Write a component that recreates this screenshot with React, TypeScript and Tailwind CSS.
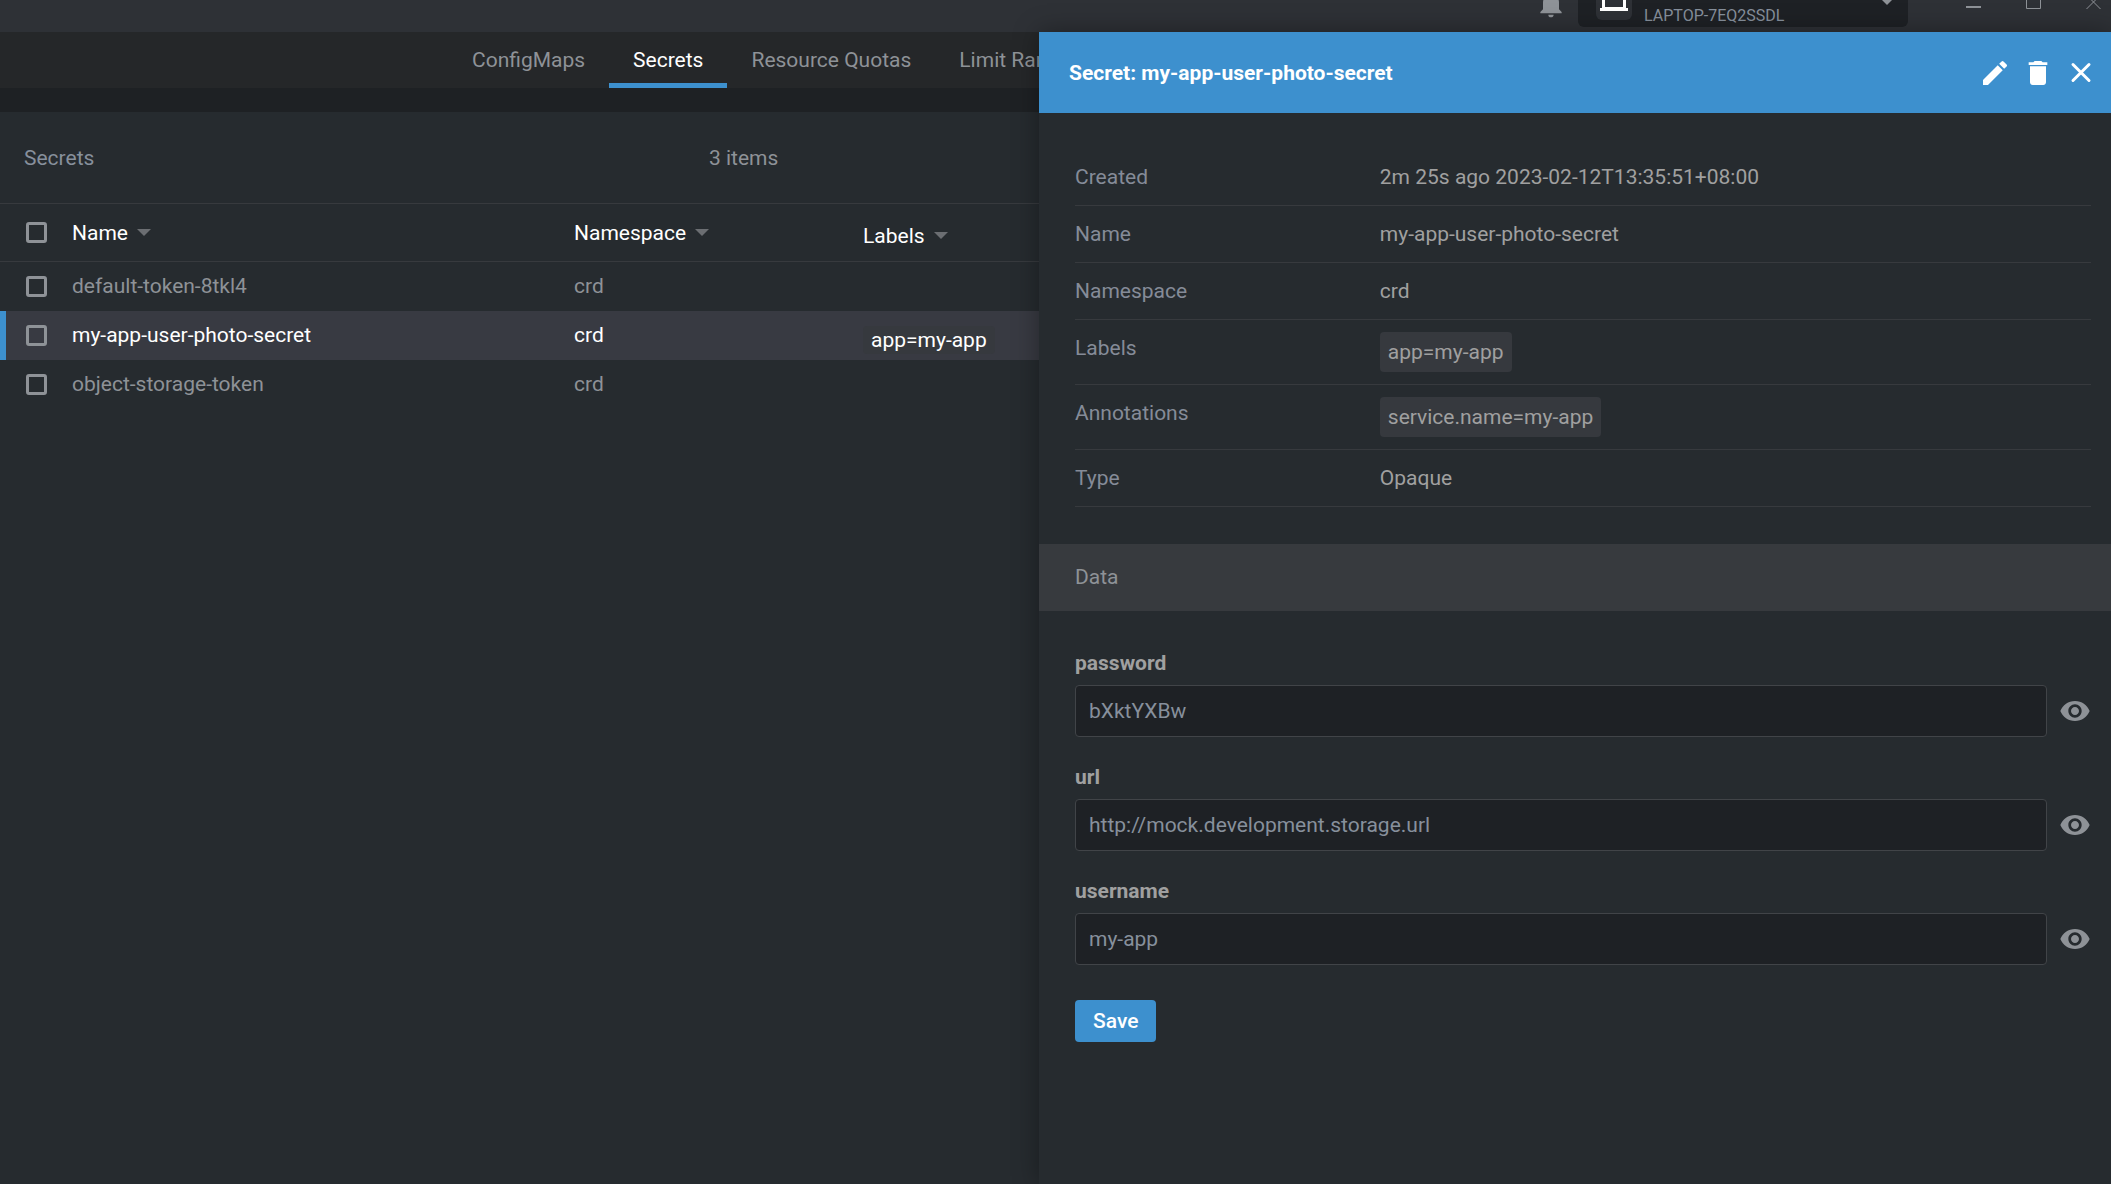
import { useState } from "react";
import { MdEdit, MdDelete, MdVisibility, MdNotifications } from "react-icons/md";

const tabs = ["ConfigMaps", "Secrets", "Resource Quotas", "Limit Ranges"];

const rows = [
  { name: "default-token-8tkl4", namespace: "crd", label: "" },
  { name: "my-app-user-photo-secret", namespace: "crd", label: "app=my-app" },
  { name: "object-storage-token", namespace: "crd", label: "" },
];

const details = [
  { name: "Created", value: "2m 25s ago 2023-02-12T13:35:51+08:00" },
  { name: "Name", value: "my-app-user-photo-secret" },
  { name: "Namespace", value: "crd" },
  { name: "Labels", value: "app=my-app", chip: true },
  { name: "Annotations", value: "service.name=my-app", chip: true },
  { name: "Type", value: "Opaque" },
];

const secretData = [
  { key: "password", value: "bXktYXBw" },
  { key: "url", value: "http://mock.development.storage.url" },
  { key: "username", value: "my-app" },
];

function Caret() {
  return (
    <svg width="14" height="7" viewBox="0 0 14 7" className="shrink-0 fill-[#6b6e72]" aria-hidden="true">
      <path d="M0 0h14L7 7z" />
    </svg>
  );
}

function Tick({ label }: { label: string }) {
  return (
    <input
      type="checkbox"
      aria-label={label}
      className="block size-[21px] appearance-none rounded-[3px] border-3 border-[#8e9297] checked:bg-[#3d90ce]"
    />
  );
}

function SortHeading({ text }: { text: string }) {
  return (
    <button type="button" className="flex items-center gap-[9px] font-normal text-white">
      {text}
      <Caret />
    </button>
  );
}

function TitleBar() {
  return (
    <header className="flex h-8 items-start justify-end overflow-hidden bg-[#2e3136]">
      <button type="button" aria-label="Notifications" className="-mt-3 mr-[11px] text-[#8e9297]">
        <MdNotifications size={32} />
      </button>
      <button type="button" className="-mt-4 flex h-[43px] w-[330px] items-end rounded-md bg-[#1e2125] pr-4 pb-[2px] pl-[18px]">
        <span className="mb-[5px] flex size-9 items-end justify-center rounded-md bg-[#2e3136] pb-[9px]">
          <svg width="28" height="22" viewBox="0 0 28 22" className="fill-white" aria-hidden="true">
            <path fillRule="evenodd" d="M4 0h20a2 2 0 0 1 2 2v17h2v3H0v-3h2V2a2 2 0 0 1 2-2zm1 3v15h18V3z" />
          </svg>
        </span>
        <span className="ml-3 flex-1 text-left text-base leading-[18px] text-[#87909c]">LAPTOP-7EQ2SSDL</span>
        <svg width="10" height="5" viewBox="0 0 10 5" className="mb-5 fill-[#8e9297]" aria-hidden="true">
          <path d="M0 0h10L5 5z" />
        </svg>
      </button>
      <div className="ml-[58px] flex w-[145px] items-start justify-between pr-[10px] text-[#8e9297]">
        <button type="button" aria-label="Minimize">
          <svg width="15" height="10" viewBox="0 0 15 10" fill="none" stroke="currentColor" strokeWidth="2">
            <path d="M0 7h15" />
          </svg>
        </button>
        <button type="button" aria-label="Maximize">
          <svg width="15" height="10" viewBox="0 0 15 10" fill="none" stroke="currentColor">
            <path d="M.5 0v8.5h14V0" />
          </svg>
        </button>
        <button type="button" aria-label="Close window">
          <svg width="15" height="10" viewBox="0 0 15 10" fill="none" stroke="currentColor">
            <path d="M.5 9l9-9M14.500 9l-9-9" />
          </svg>
        </button>
      </div>
    </header>
  );
}

function SecretsList() {
  return (
    <main className="flex min-w-0 flex-col overflow-hidden">
      <nav className="flex h-14 shrink-0 bg-[#252729] pl-[448px]">
        {tabs.map((tab) => (
          <a
            key={tab}
            href="#"
            className={
              tab === "Secrets"
                ? "flex shrink-0 items-center border-b-5 border-[#3d90ce] px-6 pt-[5px] text-white"
                : "flex shrink-0 items-center px-6 text-[#8e9297]"
            }
          >
            {tab}
          </a>
        ))}
      </nav>
      <div className="h-6 shrink-0 bg-[#1e2124]" />
      <div className="grid h-[91px] shrink-0 grid-cols-[minmax(0,1fr)_330px] items-center pl-6">
        <h1 className="text-[#87909c]">Secrets</h1>
        <p className="text-[#8e9297]">3 items</p>
      </div>
      <table className="w-full table-fixed border-separate border-spacing-0 text-left">
        <colgroup>
          <col className="w-[72px]" />
          <col className="w-[502px]" />
          <col className="w-[289px]" />
          <col />
        </colgroup>
        <thead>
          <tr className="h-[59px]">
            <th className="border-y border-[#373a3e] pl-[26px]">
              <Tick label="Select all" />
            </th>
            <th className="border-y border-[#373a3e]">
              <SortHeading text="Name" />
            </th>
            <th className="border-y border-[#373a3e]">
              <SortHeading text="Namespace" />
            </th>
            <th className="border-y border-[#373a3e] pt-[6px]">
              <SortHeading text="Labels" />
            </th>
          </tr>
        </thead>
        <tbody>
          {rows.map((row) => {
            const active = row.name === "my-app-user-photo-secret";
            return (
              <tr key={row.name} className={active ? "h-[49px] bg-[#383a42] text-white" : "h-[49px] text-[#8e9297]"}>
                <td className={active ? "border-l-6 border-[#3d90ce] pl-5" : "pl-[26px]"}>
                  <Tick label={row.name} />
                </td>
                <td className="pb-[2px]">{row.name}</td>
                <td className="pb-[2px]">{row.namespace}</td>
                <td className="pt-2">
                  {row.label && (
                    <span className="inline-block rounded bg-[#36393e] px-2 align-top leading-7">{row.label}</span>
                  )}
                </td>
              </tr>
            );
          })}
        </tbody>
      </table>
    </main>
  );
}

function SecretDrawer() {
  const [values, setValues] = useState(() => secretData.map((d) => d.value));
  return (
    <aside className="z-10 min-w-0 bg-[#262b2f] shadow-[0_0_24px_rgba(0,0,0,0.35)]">
      <div className="flex h-[81px] items-center bg-[#3d90ce] pr-[14px] pl-[30px] text-white">
        <h2 className="flex-1 font-bold">Secret: my-app-user-photo-secret</h2>
        <div className="flex gap-[11px]">
          <button type="button" aria-label="Edit">
            <MdEdit size={32} />
          </button>
          <button type="button" aria-label="Delete">
            <MdDelete size={32} />
          </button>
          <button type="button" aria-label="Close">
            <svg width="32" height="32" viewBox="0 0 32 32" stroke="currentColor" strokeWidth="3" strokeLinecap="round">
              <path d="M8 7.500l16 16M24 7.500l-16 16" />
            </svg>
          </button>
        </div>
      </div>
      <dl className="pt-9 pr-5 pl-9">
        {details.map((item) => (
          <div key={item.name} className="grid grid-cols-[3fr_7fr] border-b border-[#373a3e]">
            <dt className="py-[14px] leading-7 text-[#858b98]">{item.name}</dt>
            <dd className={item.chip ? "py-3 text-[#a0a0a0]" : "py-[14px] leading-7 text-[#a0a0a0]"}>
              {item.chip ? (
                <span className="inline-block rounded bg-[#36393e] px-2 align-top leading-10">{item.value}</span>
              ) : (
                item.value
              )}
            </dd>
          </div>
        ))}
      </dl>
      <h3 className="mt-[37px] bg-[#373a3e] px-9 py-5 leading-[27px] text-[#8e9297]">Data</h3>
      <form className="pt-9 pr-5 pl-9" onSubmit={(e) => e.preventDefault()}>
        {secretData.map((d, i) => (
          <div key={d.key} className="mb-6">
            <label htmlFor={d.key} className="block pb-[6px] leading-8 font-bold text-[#a0a0a0]">
              {d.key}
            </label>
            <div className="flex items-center gap-3">
              <input
                id={d.key}
                type="text"
                value={values[i]}
                onChange={(e) => setValues(values.map((v, j) => (j === i ? e.target.value : v)))}
                className="h-[52px] min-w-0 flex-1 rounded border border-[#414448] bg-[#1e2125] px-[13px] text-[#87909c]"
              />
              <button type="button" aria-label={`Show ${d.key}`} className="text-[#8e9297]">
                <MdVisibility size={32} />
              </button>
            </div>
          </div>
        ))}
        <button type="submit" className="mt-[11px] rounded bg-[#3d90ce] px-[18px] leading-[42px] font-medium text-white">
          Save
        </button>
      </form>
    </aside>
  );
}

export default function App() {
  return (
    <div className="flex min-h-screen flex-col bg-[#262b2f] font-[Roboto,sans-serif] text-[21px] leading-7">
      <TitleBar />
      <div className="grid flex-1 grid-cols-[minmax(0,1039fr)_minmax(0,1072fr)]">
        <SecretsList />
        <SecretDrawer />
      </div>
    </div>
  );
}
